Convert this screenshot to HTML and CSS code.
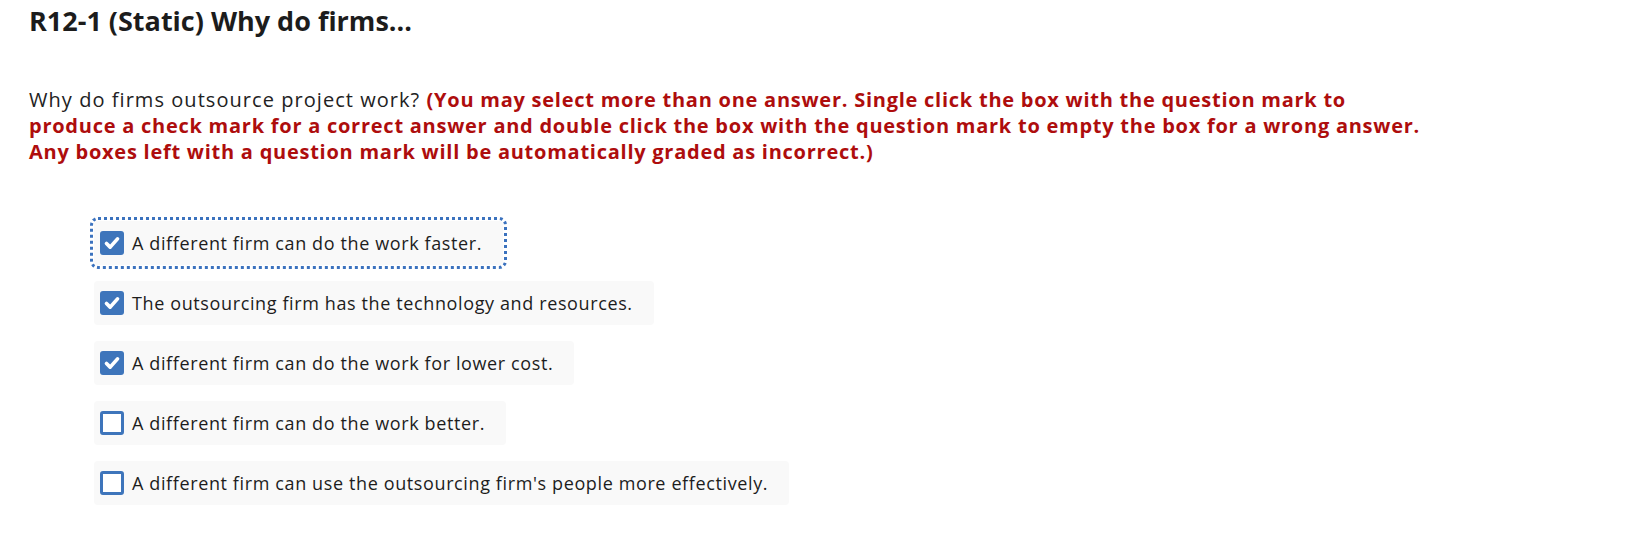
FILE: index.html
```html
<!DOCTYPE html>
<html lang="en">
<head>
<meta charset="utf-8">
<title>R12-1 (Static) Why do firms...</title>
<link rel="stylesheet" href="styles.css">
</head>
<body>
<main class="page">
  <h1 class="title">R12-1 (Static) Why do firms...</h1>
  <p class="question">Why do firms outsource project work? <span class="note">(You may select more than one answer. Single click the box with the question mark to<br>produce a check mark for a correct answer and double click the box with the question mark to empty the box for a wrong answer.<br>Any boxes left with a question mark will be automatically graded as incorrect.)</span></p>
  <ul class="options">
    <li class="option focused"><span class="box checked"><svg viewBox="0 0 24 24"><path d="M6 12.5l4 4 8-9" /></svg></span><span class="label">A different firm can do the work faster.</span></li>
    <li class="option"><span class="box checked"><svg viewBox="0 0 24 24"><path d="M6 12.5l4 4 8-9" /></svg></span><span class="label">The outsourcing firm has the technology and resources.</span></li>
    <li class="option"><span class="box checked"><svg viewBox="0 0 24 24"><path d="M6 12.5l4 4 8-9" /></svg></span><span class="label">A different firm can do the work for lower cost.</span></li>
    <li class="option"><span class="box"></span><span class="label">A different firm can do the work better.</span></li>
    <li class="option"><span class="box"></span><span class="label">A different firm can use the outsourcing firm's people more effectively.</span></li>
  </ul>
</main>
</body>
</html>
```
FILE: styles.css
```css
html, body {
  margin: 0;
  padding: 0;
  background: #ffffff;
}
body {
  font-family: "Open Sans", "Noto Sans", sans-serif;
  color: #1f1f1f;
}
.page {
  padding: 5px 0 0 29px;
}
.title {
  margin: 0;
  font-size: 27px;
  font-weight: 700;
  line-height: 32px;
  color: #1c1c1c;
  letter-spacing: 0;
}
.question {
  margin: 50px 0 0 0;
  font-size: 20px;
  line-height: 26px;
  color: #222;
  letter-spacing: 1.05px;
}
.note {
  color: #ae0d0d;
  font-weight: 700;
  letter-spacing: 0.75px;
}
.options {
  list-style: none;
  margin: 56px 0 0 65px;
  padding: 0;
  display: flex;
  flex-direction: column;
  align-items: flex-start;
  gap: 16px;
}
.option {
  display: flex;
  align-items: center;
  gap: 8px;
  height: 44px;
  padding: 0 21px 0 6px;
  background: #f9f9f9;
  border-radius: 4px;
  box-sizing: border-box;
}
.option.focused {
  outline: 3px dotted #3b72be;
  outline-offset: 1px;
}
.label {
  font-size: 18px;
  letter-spacing: 0.62px;
  color: #1d1d1d;
}
.box {
  width: 24px;
  height: 24px;
  flex: none;
  box-sizing: border-box;
  border: 3px solid #3e75bb;
  border-radius: 3px;
  background: #fff;
  display: flex;
  align-items: center;
  justify-content: center;
}
.box.checked {
  background: #3e75bb;
  border: none;
}
.box svg {
  width: 22px;
  height: 22px;
}
.box svg path {
  fill: none;
  stroke: #fff;
  stroke-width: 4;
  stroke-linecap: round;
  stroke-linejoin: round;
}
```
